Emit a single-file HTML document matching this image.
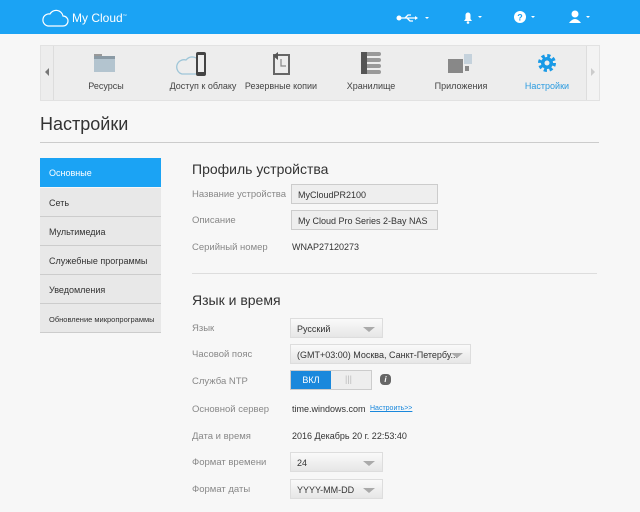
<!DOCTYPE html>
<html><head><meta charset="utf-8"><style>
*{margin:0;padding:0;box-sizing:border-box}
body{width:640px;height:512px;overflow:hidden;background:#f7f7f7;font-family:"Liberation Sans",sans-serif;position:relative;color:#333}
.a{position:absolute}
.hdr{left:0;top:0;width:640px;height:34px;background:#1ba3f4}
.nav{left:40px;top:45px;width:560px;height:56px;background:#ededed;border:1px solid #e2e2e2}
.nav .it{position:absolute;top:35px;font-size:9px;color:#444;width:90px;text-align:center}
.lbl{font-size:9.5px;color:#888;position:absolute;left:192px;white-space:nowrap}
.val{font-size:9px;color:#333;position:absolute;white-space:nowrap}
.inp{position:absolute;left:291px;width:147px;height:20px;border:1px solid #ccc;background:#eee;font-size:9px;padding:5px 6px;color:#333}
.sel{position:absolute;left:290px;height:20px;border:1px solid #ddd;background:linear-gradient(#fafafa,#e6e6e6);font-size:9px;padding:5px 24px 5px 6px;color:#333;white-space:nowrap;overflow:hidden}
.sel:after{content:"";position:absolute;right:7px;top:8px;border-left:6px solid transparent;border-right:6px solid transparent;border-top:5px solid #aaa}
.sb{position:absolute;left:40px;width:121px;height:29px;border-bottom:1px solid #ccc;background:#e8e8e8;font-size:9px;color:#333;padding:10px 9px;white-space:nowrap}
</style></head><body>
<div class="a hdr"></div>
<svg class="a" style="left:41px;top:9px" width="28" height="18" viewBox="0 0 28 18"><path d="M7 17H22a5 5 0 0 0 0-10 7 7 0 0 0-13-2A6 6 0 0 0 7 17z" fill="none" stroke="#fff" stroke-width="1.2"/></svg>
<div class="a" style="left:72px;top:11px;color:#fff;font-size:12px">My Cloud<sup style="font-size:4px">™</sup></div>
<svg class="a" style="left:396px;top:11px" width="36" height="14"><circle cx="3" cy="7" r="2.5" fill="#fff"/><path d="M3 7h16M9 7l3-3h3M11 7l3 3h3" stroke="#fff" stroke-width="1.3" fill="none"/><path d="M19 5l3 2-3 2z" fill="#fff"/><path d="M29 6h4l-2 2z" fill="#fff"/></svg>
<svg class="a" style="left:461px;top:10px" width="24" height="14"><path d="M3 11h8l-1.5-2V5a2.5 2.5 0 0 0-5 0v4z" fill="#fff"/><circle cx="7" cy="12.5" r="1.3" fill="#fff"/><path d="M17 6h4l-2 2z" fill="#fff"/></svg>
<svg class="a" style="left:513px;top:10px" width="26" height="14"><circle cx="7" cy="7" r="6" fill="#fff"/><text x="7" y="10.5" font-size="9" font-weight="bold" fill="#1ba3f4" text-anchor="middle" font-family="Liberation Sans">?</text><path d="M18 6h4l-2 2z" fill="#fff"/></svg>
<svg class="a" style="left:568px;top:9px" width="26" height="16"><circle cx="7" cy="5" r="3.5" fill="#fff"/><path d="M1 14q6-8 12 0z" fill="#fff"/><path d="M18 7h4l-2 2z" fill="#fff"/></svg>
<div class="a nav">
<div class="a" style="left:0;top:0;width:13px;height:54px;border-right:1px solid #ddd"></div>
<div class="a" style="left:4px;top:22px;border-right:4px solid #777;border-top:4px solid transparent;border-bottom:4px solid transparent"></div>
<div class="a" style="right:0;top:0;width:13px;height:54px;border-left:1px solid #ddd;background:#f3f3f3"></div>
<div class="a" style="right:4px;top:22px;border-left:4px solid #ccc;border-top:4px solid transparent;border-bottom:4px solid transparent"></div>
<svg class="a" style="left:53px;top:8px" width="22" height="18"><rect x="0" y="0" width="8" height="3" fill="#999"/><rect x="0" y="2" width="21" height="16" fill="#b3c4cf"/><rect x="0" y="2" width="21" height="3" fill="#8a9aa5"/></svg>
<svg class="a" style="left:135px;top:5px" width="36" height="26"><path d="M6 23h18V12a8 8 0 0 0-14-3 6 6 0 0 0-4 14z" fill="none" stroke="#9fc6d8" stroke-width="1.3"/><rect x="20" y="1" width="10" height="24" rx="2" fill="#444"/><rect x="22" y="4" width="6" height="17" fill="#eee"/></svg>
<svg class="a" style="left:228px;top:5px" width="22" height="24"><path d="M5 4h15v19H5z" fill="none" stroke="#666" stroke-width="2"/><path d="M9 1l-5 4 5 4z" fill="#555"/><path d="M12 8v7h5" fill="none" stroke="#888" stroke-width="1.2"/></svg>
<svg class="a" style="left:320px;top:5px" width="22" height="24"><g fill="#999"><rect x="0" y="1" width="20" height="4" rx="2"/><rect x="0" y="7" width="20" height="4" rx="2"/><rect x="0" y="13" width="20" height="4" rx="2"/><rect x="0" y="19" width="20" height="4" rx="2"/></g><rect x="0" y="1" width="6" height="22" fill="#555"/></svg>
<svg class="a" style="left:407px;top:7px" width="26" height="22"><rect x="0" y="6" width="15" height="14" fill="#888"/><rect x="16" y="1" width="8" height="10" fill="#c5d2dc"/><rect x="17" y="13" width="4" height="5" fill="#888"/></svg>
<svg class="a" style="left:496px;top:7px" width="20" height="20"><circle cx="10" cy="10" r="7" fill="none" stroke="#1a9ae6" stroke-width="4" stroke-dasharray="3 2.5"/><circle cx="10" cy="10" r="6" fill="#1a9ae6"/><circle cx="10" cy="10" r="2.5" fill="#ededed"/></svg>
<div class="it" style="left:20px">Ресурсы</div>
<div class="it" style="left:117px">Доступ к облаку</div>
<div class="it" style="left:195px">Резервные копии</div>
<div class="it" style="left:285px">Хранилище</div>
<div class="it" style="left:375px">Приложения</div>
<div class="it" style="left:461px;color:#2a9be0">Настройки</div>
</div>
<div class="a" style="left:40px;top:114px;font-size:18px;color:#333">Настройки</div>
<div class="a" style="left:40px;top:142px;width:559px;height:1px;background:#ccc"></div>
<div class="sb" style="top:158px;background:#1ba3f4;color:#fff;border-bottom:none">Основные</div>
<div class="sb" style="top:188px">Сеть</div>
<div class="sb" style="top:217px">Мультимедиа</div>
<div class="sb" style="top:246px">Служебные программы</div>
<div class="sb" style="top:275px">Уведомления</div>
<div class="sb" style="top:304px;font-size:7.5px;height:29px;padding-top:11px">Обновление микропрограммы</div>
<div class="a" style="left:192px;top:161px;font-size:14px;color:#333">Профиль устройства</div>
<div class="lbl" style="top:189px">Название устройства</div><div class="inp" style="top:184px">MyCloudPR2100</div>
<div class="lbl" style="top:215px">Описание</div><div class="inp" style="top:210px">My Cloud Pro Series 2-Bay NAS</div>
<div class="lbl" style="top:242px">Серийный номер</div><div class="val" style="left:292px;top:242px">WNAP27120273</div>
<div class="a" style="left:192px;top:273px;width:405px;height:1px;background:#ddd"></div>
<div class="a" style="left:192px;top:292px;font-size:14px;color:#333">Язык и время</div>
<div class="lbl" style="top:323px">Язык</div><div class="sel" style="top:318px;width:93px">Русский</div>
<div class="lbl" style="top:349px">Часовой пояс</div><div class="sel" style="top:344px;width:181px">(GMT+03:00) Москва, Санкт-Петербу...</div>
<div class="lbl" style="top:376px">Служба NTP</div>
<div class="a" style="left:290px;top:370px;width:82px;height:20px;border:1px solid #ccc;background:#eee"></div>
<div class="a" style="left:291px;top:371px;width:40px;height:18px;background:#1a88dc;color:#fff;font-size:9px;text-align:center;line-height:18px">ВКЛ</div>
<div class="a" style="left:345px;top:374px;color:#bbb;font-size:9px">|||</div>
<div class="a" style="left:380px;top:374px;width:11px;height:11px;border-radius:4px;background:#666;color:#fff;font-size:8px;font-style:italic;font-weight:bold;text-align:center;line-height:11px">i</div>
<div class="lbl" style="top:404px">Основной сервер</div><div class="val" style="left:292px;top:404px">time.windows.com</div>
<div class="a" style="left:370px;top:405px;font-size:7px;color:#1a88dc;text-decoration:underline">Настроить&gt;&gt;</div>
<div class="lbl" style="top:431px">Дата и время</div><div class="val" style="left:292px;top:431px">2016 Декабрь 20 г. 22:53:40</div>
<div class="lbl" style="top:457px">Формат времени</div><div class="sel" style="top:452px;width:93px">24</div>
<div class="lbl" style="top:484px">Формат даты</div><div class="sel" style="top:479px;width:93px">YYYY-MM-DD</div>
</body></html>
